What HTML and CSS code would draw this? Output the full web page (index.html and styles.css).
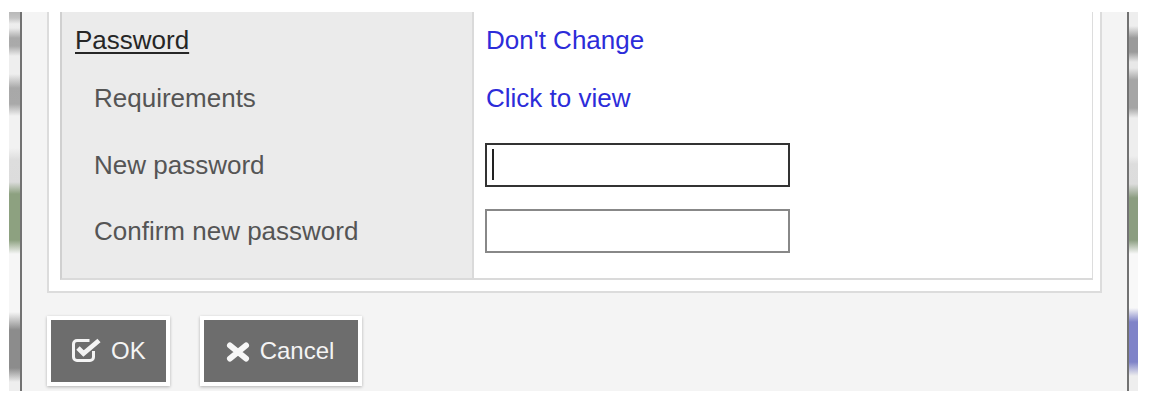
FILE: index.html
```html
<!DOCTYPE html>
<html lang="en">
<head>
<meta charset="utf-8">
<title>Password</title>
<link rel="stylesheet" href="styles.css">
</head>
<body>
<div class="screen">
  <div class="edge edge-left"></div>
  <div class="rule"></div>
  <div class="panel">
    <div class="frame">
      <div class="table">
        <div class="cell label row-1"><span class="heading">Password</span></div>
        <div class="cell value row-1"><a class="link" href="#">Don't Change</a></div>

        <div class="cell label sub row-2">Requirements</div>
        <div class="cell value row-2"><a class="link" href="#">Click to view</a></div>

        <div class="cell label sub row-3">New password</div>
        <div class="cell value field-cell row-3">
          <span class="field">
            <input class="input input-focus" type="password">
            <span class="caret"></span>
          </span>
        </div>

        <div class="cell label sub row-4">Confirm new password</div>
        <div class="cell value field-cell row-4">
          <span class="field">
            <input class="input" type="password">
          </span>
        </div>
      </div>
    </div>
    <div class="actions">
      <button class="btn btn-ok" type="button">
        <svg class="icon-check" width="29" height="24" viewBox="0 0 29 24" aria-hidden="true">
          <path d="M17.5 2.5 H5 a3.5 3.5 0 0 0 -3.5 3.5 V19 a3.5 3.5 0 0 0 3.5 3.5 H18 a3.5 3.5 0 0 0 3.5 -3.5 V13" fill="none" stroke="#f4f4f4" stroke-width="3"/>
          <path d="M6 10 L11.5 15.5 L27 2.5" fill="none" stroke="#f4f4f4" stroke-width="4.8" stroke-linejoin="miter"/>
        </svg>
        <span>OK</span>
      </button>
      <button class="btn btn-cancel" type="button">
        <svg class="icon-times" width="24" height="20" viewBox="0 0 24 20" aria-hidden="true">
          <path d="M4 3.5 L20 16.5 M20 3.5 L4 16.5" fill="none" stroke="#f6f6f6" stroke-width="6" stroke-linecap="round"/>
        </svg>
        <span>Cancel</span>
      </button>
    </div>
  </div>
  <div class="rule"></div>
  <div class="edge edge-right"></div>
</div>
</body>
</html>
```
FILE: styles.css
```css
html, body {
  margin: 0;
  padding: 0;
  background: #ffffff;
}

body {
  font-family: "Liberation Sans", Arial, sans-serif;
}

.screen {
  display: flex;
  height: 379px;
  margin: 12px 12px 0 9px;
}

.edge {
  flex: none;
}

.edge-left {
  width: 11px;
  background: linear-gradient(to bottom,
    #b8b8b8 0px, #c4c4c4 6px, #eeeeee 12px, #ececec 16px,
    #a9a9a9 26px, #aaaaaa 34px, #eeeeee 44px, #eeeeee 62px,
    #a8a8a8 76px, #a9a9a9 92px, #f2f2f2 104px, #f2f2f2 136px,
    #dddddd 148px, #dcdcdc 170px, #8da180 182px, #8da180 228px,
    #f6f6f6 242px, #f6f6f6 300px, #8c8c8c 318px, #8c8c8c 356px,
    #eeeeee 370px, #eeeeee 379px);
}

.edge-right {
  width: 9px;
  background: linear-gradient(to bottom,
    #eeeeee 0px, #eeeeee 14px, #9a9a9a 26px, #9a9a9a 40px,
    #e8e8e8 50px, #e8e8e8 56px, #a5a5a5 68px, #a5a5a5 96px,
    #eeeeee 106px, #eeeeee 144px, #dddddd 152px, #dcdcdc 172px,
    #8b9d80 186px, #8b9d80 228px, #f8f8f8 242px, #f8f8f8 296px,
    #7f83c8 310px, #7f83c8 350px, #eeeeee 364px, #eeeeee 379px);
}

.rule {
  flex: none;
  width: 2px;
  background: #727272;
}

.panel {
  flex: 1;
  display: flex;
  flex-direction: column;
  background: #f4f4f4;
  padding: 0 25px;
  min-width: 0;
}

.frame {
  background: #ffffff;
  border: 2px solid #dcdcdc;
  border-top: none;
  padding: 0 7px 11px 11px;
}

.table {
  display: grid;
  grid-template-columns: 412px 1fr;
  grid-template-rows: 57px 63px 66px 80px;
  border-left: 2px solid #d0d0d0;
  border-right: 1px solid #dddddd;
  border-bottom: 2px solid #dadada;
  background: #ffffff;
}

.cell {
  display: flex;
  align-items: center;
  font-size: 26px;
}

.label {
  background: #ebebeb;
  border-right: 2px solid #dadada;
  padding-left: 13px;
  color: #555555;
}

.label.sub {
  padding-left: 32px;
}

.value {
  padding-left: 12px;
}

.row-2 {
  padding-bottom: 5px;
}

.row-4 {
  padding-bottom: 14px;
}

.heading {
  color: #262626;
  text-decoration: underline;
  text-decoration-thickness: 2px;
  text-underline-offset: 3px;
}

.link {
  color: #2c2cd9;
  text-decoration: none;
}

.field-cell {
  padding-left: 11px;
}

.field {
  position: relative;
  display: block;
  width: 305px;
  height: 44px;
}

.input {
  display: block;
  box-sizing: border-box;
  width: 305px;
  height: 44px;
  margin: 0;
  padding: 0 8px;
  border: 2px solid #888888;
  border-radius: 0;
  background: #ffffff;
  outline: none;
  font-size: 22px;
}

.input-focus {
  border-color: #333333;
}

.caret {
  position: absolute;
  left: 7px;
  top: 6px;
  width: 2px;
  height: 31px;
  background: #222222;
}

.actions {
  display: flex;
  gap: 30px;
  margin-top: 23px;
}

.btn {
  display: flex;
  align-items: center;
  gap: 10px;
  box-sizing: content-box;
  height: 62px;
  margin: 0;
  padding: 0 22px;
  border: 4px solid #ffffff;
  border-radius: 0;
  background: #6d6d6d;
  box-shadow: 0 1px 3px rgba(0, 0, 0, 0.28);
  color: #f4f4f4;
  font-family: "Liberation Sans", Arial, sans-serif;
  font-size: 24px;
  cursor: pointer;
}

.btn-ok {
  padding: 0 20px 0 21px;
}

.btn-cancel {
  padding: 0 24px 0 22px;
}

.icon-check {
  display: block;
  margin-top: -2px;
}

.icon-times {
  display: block;
  margin-top: 2px;
}
```
